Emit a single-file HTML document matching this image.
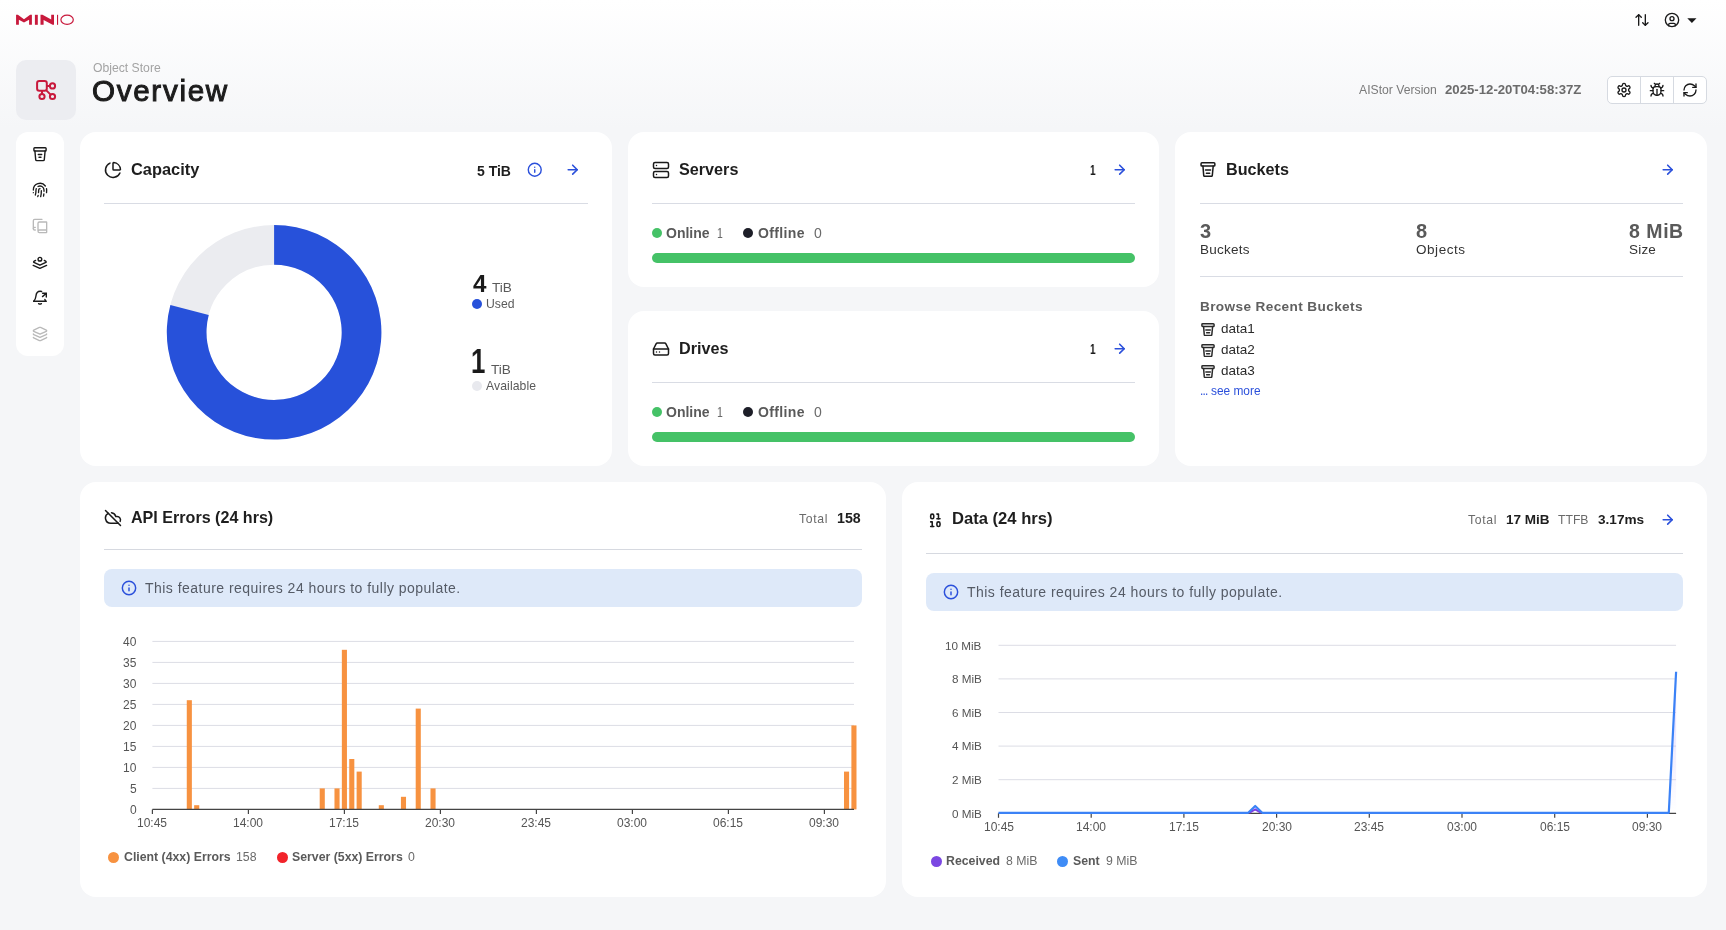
<!DOCTYPE html>
<html><head><meta charset="utf-8"><title>Overview</title>
<style>
html,body{margin:0;padding:0;}
body{width:1726px;height:930px;overflow:hidden;position:relative;font-family:"Liberation Sans",sans-serif;
background:linear-gradient(180deg,#ffffff 0px,#f5f6f8 128px,#f5f6f8 930px);}
.t{position:absolute;line-height:1;white-space:nowrap;will-change:transform;}
.card{position:absolute;background:#fff;border-radius:16px;}
</style></head><body>
<svg style="position:absolute;left:0px;top:0px;" width="80" height="30" viewBox="0 0 80 30" fill="none">
<path d="M16.07 24.8 V14.8 H17.9 L24 19.2 L30.1 14.8 H31.9 V24.8 H29.1 V19.8 L24 22.6 L18.87 19.8 V24.8 Z" fill="#c8193c"/>
<rect x="34.9" y="14.8" width="2.9" height="10" fill="#c8193c"/>
<path d="M40.5 24.8 V14.8 H42.5 L51.2 19.6 V14.8 H54 V24.8 H52.6 L43.6 19.9 V24.8 Z" fill="#c8193c"/>
<rect x="57" y="14.8" width="1.1" height="10" fill="#c8193c"/>
<ellipse cx="67.1" cy="19.75" rx="6.2" ry="4.6" stroke="#c8193c" stroke-width="1.2"/>
</svg>
<svg style="position:absolute;left:1634.00px;top:12.00px" width="16" height="16" viewBox="0 0 24 24" fill="none" stroke="#1a1a1a" stroke-width="2" stroke-linecap="round" stroke-linejoin="round"><path d="m21 16-4 4-4-4"/><path d="M17 20V4"/><path d="m3 8 4-4 4 4"/><path d="M7 4v16"/></svg>
<svg style="position:absolute;left:1664.00px;top:12.00px" width="16" height="16" viewBox="0 0 24 24" fill="none" stroke="#1a1a1a" stroke-width="2" stroke-linecap="round" stroke-linejoin="round"><circle cx="12" cy="12" r="10"/><circle cx="12" cy="10" r="3"/><path d="M7 20.662V19a2 2 0 0 1 2-2h6a2 2 0 0 1 2 2v1.662"/></svg>
<svg style="position:absolute;left:1687px;top:18px;" width="10" height="6" viewBox="0 0 10 6" fill="none"><path d="M0.3 0.3 H9.5 L4.9 5 Z" fill="#1a1a1a"/></svg>
<div style="position:absolute;left:16px;top:60px;width:60px;height:60px;background:#ecedf1;border-radius:10px;"></div>
<svg style="position:absolute;left:34px;top:78px;" width="24" height="24" viewBox="0 0 24 24" fill="none">
<rect x="3.1" y="2.9" width="9.7" height="9.8" rx="2.2" stroke="#c8193c" stroke-width="2"/>
<circle cx="18.5" cy="7.9" r="2.6" stroke="#c8193c" stroke-width="2"/>
<circle cx="8" cy="18.5" r="2.6" stroke="#c8193c" stroke-width="2"/>
<circle cx="18.5" cy="18.5" r="2.6" stroke="#c8193c" stroke-width="2"/>
<path d="M12.8 7.9 H15.9 M8 12.7 V15.9 M12.6 12.6 L16.6 16.6" stroke="#c8193c" stroke-width="2"/>
</svg>
<div class="t" style="left:92.60px;top:61.67px;font-size:12.2px;font-weight:400;color:#a3a3a3;">Object Store</div>
<div class="t" style="left:92.40px;top:75.84px;font-size:29.6px;font-weight:400;color:#1c1c1c;-webkit-text-stroke:1px #1c1c1c;letter-spacing:1.7px;">Overview</div>
<div class="t" style="left:1358.60px;top:83.67px;font-size:12.2px;font-weight:400;color:#7a7a7a;">AIStor Version</div>
<div class="t" style="left:1445.40px;top:82.83px;font-size:13.2px;font-weight:700;color:#6b6b6b;">2025-12-20T04:58:37Z</div>
<div style="position:absolute;left:1607px;top:76px;width:100px;height:28px;box-sizing:border-box;border:1px solid #d6dae1;border-radius:5px;background:#fff;"></div>
<div style="position:absolute;left:1640px;top:77px;width:1px;height:26px;background:#d6dae1;"></div>
<div style="position:absolute;left:1673px;top:77px;width:1px;height:26px;background:#d6dae1;"></div>
<svg style="position:absolute;left:1616.00px;top:81.80px" width="16" height="16" viewBox="0 0 24 24" fill="none" stroke="#1a1a1a" stroke-width="2" stroke-linecap="round" stroke-linejoin="round"><path d="M12.22 2h-.44a2 2 0 0 0-2 2v.18a2 2 0 0 1-1 1.73l-.43.25a2 2 0 0 1-2 0l-.15-.08a2 2 0 0 0-2.73.73l-.22.38a2 2 0 0 0 .73 2.73l.15.1a2 2 0 0 1 1 1.72v.51a2 2 0 0 1-1 1.74l-.15.09a2 2 0 0 0-.73 2.73l.22.38a2 2 0 0 0 2.73.73l.15-.08a2 2 0 0 1 2 0l.43.25a2 2 0 0 1 1 1.73V20a2 2 0 0 0 2 2h.44a2 2 0 0 0 2-2v-.18a2 2 0 0 1 1-1.73l.43-.25a2 2 0 0 1 2 0l.15.08a2 2 0 0 0 2.73-.73l.22-.39a2 2 0 0 0-.73-2.73l-.15-.08a2 2 0 0 1-1-1.74v-.5a2 2 0 0 1 1-1.74l.15-.09a2 2 0 0 0 .73-2.73l-.22-.38a2 2 0 0 0-2.73-.73l-.15.08a2 2 0 0 1-2 0l-.43-.25a2 2 0 0 1-1-1.73V4a2 2 0 0 0-2-2z"/><circle cx="12" cy="12" r="3"/></svg>
<svg style="position:absolute;left:1648.90px;top:81.50px" width="16" height="16" viewBox="0 0 24 24" fill="none" stroke="#1a1a1a" stroke-width="2" stroke-linecap="round" stroke-linejoin="round"><path d="m8 2 1.88 1.88"/><path d="M14.12 3.88 16 2"/><path d="M9 7.13v-1a3.003 3.003 0 1 1 6 0v1"/><path d="M12 20c-3.3 0-6-2.7-6-6v-3a4 4 0 0 1 4-4h4a4 4 0 0 1 4 4v3c0 3.3-2.7 6-6 6"/><path d="M12 20v-9"/><path d="M6.53 9C4.6 8.8 3 7.1 3 5"/><path d="M6 13H2"/><path d="M3 21c0-2.1 1.7-3.9 3.8-4"/><path d="M20.97 5c0 2.1-1.6 3.8-3.5 4"/><path d="M22 13h-4"/><path d="M17.2 17c2.1.1 3.8 1.9 3.8 4"/></svg>
<svg style="position:absolute;left:1681.90px;top:81.60px" width="16" height="16" viewBox="0 0 24 24" fill="none" stroke="#1a1a1a" stroke-width="2" stroke-linecap="round" stroke-linejoin="round"><path d="M3 12a9 9 0 0 1 9-9 9.75 9.75 0 0 1 6.74 2.74L21 8"/><path d="M21 3v5h-5"/><path d="M21 12a9 9 0 0 1-9 9 9.75 9.75 0 0 1-6.74-2.74L3 16"/><path d="M8 16H3v5"/></svg>
<div style="position:absolute;left:16px;top:132px;width:48px;height:224px;background:#fff;border-radius:12px;"></div>
<svg style="position:absolute;left:32px;top:146px;" width="16" height="16" viewBox="0 0 16 16" fill="none">
<rect x="1.9" y="1.7" width="12.2" height="3.3" rx="0.8" stroke="#1a1a1a" stroke-width="1.4" stroke-linecap="round" stroke-linejoin="round"/>
<path d="M2.9 5 L3.7 13.6 Q3.8 14.6 4.8 14.6 H11.2 Q12.2 14.6 12.3 13.6 L13.1 5" stroke="#1a1a1a" stroke-width="1.4" stroke-linecap="round" stroke-linejoin="round"/>
<path d="M6.3 8.5 H9.7 M7 11.3 H9" stroke="#1a1a1a" stroke-width="1.4" stroke-linecap="round" stroke-linejoin="round"/>
</svg>
<svg style="position:absolute;left:31.85px;top:181.50px" width="16" height="16" viewBox="0 0 24 24" fill="none" stroke="#1a1a1a" stroke-width="2" stroke-linecap="round" stroke-linejoin="round"><path d="M12 10a2 2 0 0 0-2 2c0 1.02-.1 2.51-.26 4"/><path d="M14 13.12c0 2.38 0 6.38-1 8.88"/><path d="M17.29 21.02c.12-.6.43-2.3.5-3.02"/><path d="M2 12a10 10 0 0 1 18-6"/><path d="M2 16h.01"/><path d="M21.8 16c.2-2 .131-5.354 0-6"/><path d="M5 19.5C5.5 18 6 15 6 12a6 6 0 0 1 .34-2"/><path d="M8.65 22c.21-.66.45-1.32.57-2"/><path d="M9 6.8a6 6 0 0 1 9 5.2v2"/></svg>
<svg style="position:absolute;left:32.00px;top:217.80px" width="16" height="16" viewBox="0 0 24 24" fill="none" stroke="#b9b9b9" stroke-width="2" stroke-linecap="round" stroke-linejoin="round"><path d="M2 16V4a2 2 0 0 1 2-2h11"/><path d="M22 18H11a2 2 0 1 0 0 4h10.5a.5.5 0 0 0 .5-.5v-15a.5.5 0 0 0-.5-.5H11a2 2 0 0 0-2 2v12"/><path d="M5 14H4a2 2 0 1 0 0 4h1"/></svg>
<svg style="position:absolute;left:31px;top:254px;" width="18" height="18" viewBox="0 0 18 18" fill="none">
<circle cx="8.9" cy="5.2" r="1.85" stroke="#1a1a1a" stroke-width="1.4" stroke-linecap="round" stroke-linejoin="round"/>
<path d="M4.6 6.4 L2.9 7.4 Q2.3 8 2.9 8.4 L8.9 11.2 L14.9 8.4 Q15.5 8 14.9 7.4 L13.3 6.4" stroke="#1a1a1a" stroke-width="1.4" stroke-linecap="round" stroke-linejoin="round"/>
<path d="M2.2 11.4 L8.9 14.3 L15.6 11.4" stroke="#1a1a1a" stroke-width="1.4" stroke-linecap="round" stroke-linejoin="round"/>
</svg>
<svg style="position:absolute;left:31px;top:288px;" width="18" height="18" viewBox="0 0 18 18" fill="none">
<path d="M2.7 13.3 C3.9 12 4.7 10.5 4.9 8.2 C5.2 5 6.6 3.3 9.2 3.3 Q10 3.3 10.6 3.5" stroke="#1a1a1a" stroke-width="1.4" stroke-linecap="round" stroke-linejoin="round"/>
<path d="M2.7 13.3 H15.3 Q14.3 12.6 13.9 11.5" stroke="#1a1a1a" stroke-width="1.4" stroke-linecap="round" stroke-linejoin="round"/>
<path d="M11.5 8.6 L15.3 5.3 M11.6 5.3 H15.3 V9" stroke="#1a1a1a" stroke-width="1.4" stroke-linecap="round" stroke-linejoin="round"/>
<path d="M7.6 15.7 Q9 16.6 10.4 15.7" stroke="#1a1a1a" stroke-width="1.4" stroke-linecap="round" stroke-linejoin="round"/>
</svg>
<svg style="position:absolute;left:32.10px;top:325.80px" width="16" height="16" viewBox="0 0 24 24" fill="none" stroke="#b9b9b9" stroke-width="2" stroke-linecap="round" stroke-linejoin="round"><path d="M12.83 2.18a2 2 0 0 0-1.66 0L2.6 6.08a1 1 0 0 0 0 1.83l8.58 3.91a2 2 0 0 0 1.66 0l8.58-3.9a1 1 0 0 0 0-1.83z"/><path d="M2 12a1 1 0 0 0 .58.91l8.6 3.91a2 2 0 0 0 1.65 0l8.58-3.9A1 1 0 0 0 22 12"/><path d="M2 17a1 1 0 0 0 .58.91l8.6 3.91a2 2 0 0 0 1.65 0l8.58-3.9A1 1 0 0 0 22 17"/></svg>
<div class="card" style="left:80px;top:132px;width:532px;height:334px;"></div>
<svg style="position:absolute;left:104.00px;top:160.85px" width="18" height="18" viewBox="0 0 24 24" fill="none" stroke="#1a1a1a" stroke-width="2" stroke-linecap="round" stroke-linejoin="round"><path d="M21 12c.552 0 1.005-.449.95-.998a10 10 0 0 0-8.953-8.951c-.55-.055-.998.398-.998.95v8a1 1 0 0 0 1 1z"/><path d="M21.21 15.89A10 10 0 1 1 8 2.83"/></svg>
<div class="t" style="left:130.80px;top:161.42px;font-size:16.4px;font-weight:700;color:#1e1e1e;">Capacity</div>
<div class="t" style="left:476.60px;top:163.55px;font-size:14px;font-weight:700;color:#1e1e1e;">5 TiB</div>
<svg style="position:absolute;left:527.25px;top:162.25px" width="15.5" height="15.5" viewBox="0 0 24 24" fill="none" stroke="#2b50db" stroke-width="2.2" stroke-linecap="round" stroke-linejoin="round"><circle cx="12" cy="12" r="10"/><path d="M12 16v-4"/><path d="M12 8h.01"/></svg>
<svg style="position:absolute;left:565.30px;top:162.30px" width="15.4" height="15.4" viewBox="0 0 24 24" fill="none" stroke="#2b50db" stroke-width="2.5" stroke-linecap="round" stroke-linejoin="round"><path d="M5 12h14"/><path d="m12 5 7 7-7 7"/></svg>
<div style="position:absolute;left:104px;top:203px;width:484px;height:1px;background:#d9dce4;"></div>
<svg style="position:absolute;left:0;top:0" width="1726" height="930" viewBox="0 0 1726 930">
<circle cx="274.1" cy="332.3" r="87.44999999999999" stroke="#ebecf0" stroke-width="39.7" fill="none"/>
<path d="M274.10 225.00 A107.3 107.3 0 1 1 170.36 304.90 L208.74 315.04 A67.6 67.6 0 1 0 274.10 264.70 Z" fill="#2751da"/>
</svg>
<div class="t" style="left:472.80px;top:272.31px;font-size:24.2px;font-weight:700;color:#1a1a1a;">4</div>
<div class="t" style="left:491.90px;top:281.29px;font-size:13.6px;font-weight:400;color:#5a5a5a;">TiB</div>
<div style="position:absolute;left:472px;top:299px;width:10px;height:10px;background:#2751da;border-radius:50%;"></div>
<div class="t" style="left:486.40px;top:297.57px;font-size:12.2px;font-weight:400;color:#5a5a5a;">Used</div>
<div class="t" style="left:471.30px;top:343.37px;font-size:35px;font-weight:700;color:#1a1a1a;transform:scaleX(0.74);transform-origin:0 0;">1</div>
<div class="t" style="left:491.00px;top:363.29px;font-size:13.6px;font-weight:400;color:#5a5a5a;">TiB</div>
<div style="position:absolute;left:472px;top:381px;width:10px;height:10px;background:#e8e9ee;border-radius:50%;"></div>
<div class="t" style="left:486.40px;top:380.17px;font-size:12.2px;font-weight:400;color:#5a5a5a;letter-spacing:0.1px;">Available</div>
<div class="card" style="left:628px;top:132px;width:531px;height:155px;"></div>
<svg style="position:absolute;left:652.00px;top:161.05px" width="18" height="18" viewBox="0 0 24 24" fill="none" stroke="#1a1a1a" stroke-width="2" stroke-linecap="round" stroke-linejoin="round"><rect width="20" height="8" x="2" y="2" rx="2" ry="2"/><rect width="20" height="8" x="2" y="14" rx="2" ry="2"/><line x1="6" x2="6.01" y1="6" y2="6"/><line x1="6" x2="6.01" y1="18" y2="18"/></svg>
<div class="t" style="left:678.60px;top:161.49px;font-size:16.2px;font-weight:700;color:#1e1e1e;">Servers</div>
<div class="t" style="left:1090.30px;top:163.15px;font-size:14px;font-weight:700;color:#1e1e1e;transform:scaleX(0.7);transform-origin:0 0;">1</div>
<svg style="position:absolute;left:1112.30px;top:162.30px" width="15.4" height="15.4" viewBox="0 0 24 24" fill="none" stroke="#2b50db" stroke-width="2.5" stroke-linecap="round" stroke-linejoin="round"><path d="M5 12h14"/><path d="m12 5 7 7-7 7"/></svg>
<div style="position:absolute;left:652px;top:203px;width:483px;height:1px;background:#d9dce4;"></div>
<div style="position:absolute;left:652px;top:228px;width:10px;height:10px;background:#45c267;border-radius:50%;"></div>
<div class="t" style="left:665.80px;top:226.15px;font-size:14px;font-weight:700;color:#5a5a5a;">Online</div>
<div class="t" style="left:716.60px;top:226.15px;font-size:14px;font-weight:400;color:#6a6a6a;transform:scaleX(0.75);transform-origin:0 0;">1</div>
<div style="position:absolute;left:743px;top:228px;width:10px;height:10px;background:#1d1e28;border-radius:50%;"></div>
<div class="t" style="left:757.70px;top:226.15px;font-size:14px;font-weight:700;color:#5a5a5a;letter-spacing:0.35px;">Offline</div>
<div class="t" style="left:813.50px;top:226.15px;font-size:14px;font-weight:400;color:#6a6a6a;">0</div>
<div style="position:absolute;left:652px;top:253px;width:483px;height:10px;background:#45c267;border-radius:5px;"></div>
<div class="card" style="left:628px;top:311px;width:531px;height:155px;"></div>
<svg style="position:absolute;left:651.85px;top:339.90px" width="18" height="18" viewBox="0 0 24 24" fill="none" stroke="#1a1a1a" stroke-width="2" stroke-linecap="round" stroke-linejoin="round"><line x1="22" x2="2" y1="12" y2="12"/><path d="M5.45 5.11 2 12v6a2 2 0 0 0 2 2h16a2 2 0 0 0 2-2v-6l-3.45-6.89A2 2 0 0 0 16.76 4H7.24a2 2 0 0 0-1.79 1.11z"/><line x1="6" x2="6.01" y1="16" y2="16"/><line x1="10" x2="10.01" y1="16" y2="16"/></svg>
<div class="t" style="left:678.60px;top:340.49px;font-size:16.2px;font-weight:700;color:#1e1e1e;">Drives</div>
<div class="t" style="left:1090.30px;top:342.15px;font-size:14px;font-weight:700;color:#1e1e1e;transform:scaleX(0.7);transform-origin:0 0;">1</div>
<svg style="position:absolute;left:1112.30px;top:341.30px" width="15.4" height="15.4" viewBox="0 0 24 24" fill="none" stroke="#2b50db" stroke-width="2.5" stroke-linecap="round" stroke-linejoin="round"><path d="M5 12h14"/><path d="m12 5 7 7-7 7"/></svg>
<div style="position:absolute;left:652px;top:382px;width:483px;height:1px;background:#d9dce4;"></div>
<div style="position:absolute;left:652px;top:407px;width:10px;height:10px;background:#45c267;border-radius:50%;"></div>
<div class="t" style="left:665.80px;top:405.15px;font-size:14px;font-weight:700;color:#5a5a5a;">Online</div>
<div class="t" style="left:716.60px;top:405.15px;font-size:14px;font-weight:400;color:#6a6a6a;transform:scaleX(0.75);transform-origin:0 0;">1</div>
<div style="position:absolute;left:743px;top:407px;width:10px;height:10px;background:#1d1e28;border-radius:50%;"></div>
<div class="t" style="left:757.70px;top:405.15px;font-size:14px;font-weight:700;color:#5a5a5a;letter-spacing:0.35px;">Offline</div>
<div class="t" style="left:813.50px;top:405.15px;font-size:14px;font-weight:400;color:#6a6a6a;">0</div>
<div style="position:absolute;left:652px;top:432px;width:483px;height:10px;background:#45c267;border-radius:5px;"></div>
<div class="card" style="left:1175px;top:132px;width:532px;height:334px;"></div>
<svg style="position:absolute;left:1200px;top:161px;transform-origin:0 0;transform:scale(1.0);" width="16" height="16" viewBox="0 0 16 16" fill="none">
<rect x="1.05" y="1.85" width="13.8" height="3.2" rx="0.9" stroke="#1a1a1a" stroke-width="1.5" stroke-linecap="round" stroke-linejoin="round"/>
<path d="M2.95 5.1 L3.7 14.4 Q3.8 15.35 4.7 15.35 H11.3 Q12.2 15.35 12.3 14.4 L13.2 5.1" stroke="#1a1a1a" stroke-width="1.5" stroke-linecap="round" stroke-linejoin="round"/>
<path d="M5.5 9 H10.6 M6.4 12.35 H9.7" stroke="#1a1a1a" stroke-width="1.5" stroke-linecap="round" stroke-linejoin="round"/>
</svg>
<div class="t" style="left:1226.00px;top:161.29px;font-size:16.2px;font-weight:700;color:#1e1e1e;">Buckets</div>
<svg style="position:absolute;left:1660.30px;top:162.30px" width="15.4" height="15.4" viewBox="0 0 24 24" fill="none" stroke="#2b50db" stroke-width="2.5" stroke-linecap="round" stroke-linejoin="round"><path d="M5 12h14"/><path d="m12 5 7 7-7 7"/></svg>
<div style="position:absolute;left:1200px;top:203px;width:483px;height:1px;background:#d9dce4;"></div>
<div class="t" style="left:1200.00px;top:221.07px;font-size:20px;font-weight:700;color:#5a5a5a;">3</div>
<div class="t" style="left:1200.00px;top:243.17px;font-size:13.5px;font-weight:400;color:#333;letter-spacing:0.25px;">Buckets</div>
<div class="t" style="left:1415.60px;top:220.87px;font-size:20px;font-weight:700;color:#5a5a5a;">8</div>
<div class="t" style="left:1415.60px;top:243.17px;font-size:13.5px;font-weight:400;color:#333;letter-spacing:0.55px;">Objects</div>
<div class="t" style="left:1628.60px;top:222.29px;font-size:19.5px;font-weight:700;color:#5a5a5a;letter-spacing:0.55px;">8 MiB</div>
<div class="t" style="left:1628.60px;top:243.17px;font-size:13.5px;font-weight:400;color:#333;letter-spacing:0.2px;">Size</div>
<div style="position:absolute;left:1200px;top:276px;width:483px;height:1px;background:#d9dce4;"></div>
<div class="t" style="left:1200.00px;top:299.89px;font-size:13.6px;font-weight:700;color:#606060;letter-spacing:0.38px;">Browse Recent Buckets</div>
<svg style="position:absolute;left:1200.6px;top:321.6px;transform-origin:0 0;transform:scale(0.88);" width="16" height="16" viewBox="0 0 16 16" fill="none">
<rect x="1.05" y="1.85" width="13.8" height="3.2" rx="0.9" stroke="#2a2a2a" stroke-width="1.7" stroke-linecap="round" stroke-linejoin="round"/>
<path d="M2.95 5.1 L3.7 14.4 Q3.8 15.35 4.7 15.35 H11.3 Q12.2 15.35 12.3 14.4 L13.2 5.1" stroke="#2a2a2a" stroke-width="1.7" stroke-linecap="round" stroke-linejoin="round"/>
<path d="M5.5 9 H10.6 M6.4 12.35 H9.7" stroke="#2a2a2a" stroke-width="1.7" stroke-linecap="round" stroke-linejoin="round"/>
</svg>
<div class="t" style="left:1220.70px;top:322.47px;font-size:13.5px;font-weight:400;color:#2a2a2a;">data1</div>
<svg style="position:absolute;left:1200.6px;top:342.6px;transform-origin:0 0;transform:scale(0.88);" width="16" height="16" viewBox="0 0 16 16" fill="none">
<rect x="1.05" y="1.85" width="13.8" height="3.2" rx="0.9" stroke="#2a2a2a" stroke-width="1.7" stroke-linecap="round" stroke-linejoin="round"/>
<path d="M2.95 5.1 L3.7 14.4 Q3.8 15.35 4.7 15.35 H11.3 Q12.2 15.35 12.3 14.4 L13.2 5.1" stroke="#2a2a2a" stroke-width="1.7" stroke-linecap="round" stroke-linejoin="round"/>
<path d="M5.5 9 H10.6 M6.4 12.35 H9.7" stroke="#2a2a2a" stroke-width="1.7" stroke-linecap="round" stroke-linejoin="round"/>
</svg>
<div class="t" style="left:1220.70px;top:343.42px;font-size:13.5px;font-weight:400;color:#2a2a2a;">data2</div>
<svg style="position:absolute;left:1200.6px;top:363.6px;transform-origin:0 0;transform:scale(0.88);" width="16" height="16" viewBox="0 0 16 16" fill="none">
<rect x="1.05" y="1.85" width="13.8" height="3.2" rx="0.9" stroke="#2a2a2a" stroke-width="1.7" stroke-linecap="round" stroke-linejoin="round"/>
<path d="M2.95 5.1 L3.7 14.4 Q3.8 15.35 4.7 15.35 H11.3 Q12.2 15.35 12.3 14.4 L13.2 5.1" stroke="#2a2a2a" stroke-width="1.7" stroke-linecap="round" stroke-linejoin="round"/>
<path d="M5.5 9 H10.6 M6.4 12.35 H9.7" stroke="#2a2a2a" stroke-width="1.7" stroke-linecap="round" stroke-linejoin="round"/>
</svg>
<div class="t" style="left:1220.70px;top:364.37px;font-size:13.5px;font-weight:400;color:#2a2a2a;">data3</div>
<div class="t" style="left:1200.20px;top:385.73px;font-size:11.9px;font-weight:400;color:#2b50db;"><span style="letter-spacing:-0.75px">...</span> see more</div>
<div class="card" style="left:80px;top:482px;width:806px;height:415px;"></div>
<svg style="position:absolute;left:104.10px;top:509.00px" width="18" height="18" viewBox="0 0 24 24" fill="none" stroke="#1a1a1a" stroke-width="2" stroke-linecap="round" stroke-linejoin="round"><path d="m2 2 20 20"/><path d="M5.782 5.782A7 7 0 0 0 9 19h8.5a4.5 4.5 0 0 0 1.307-.193"/><path d="M21.532 16.5A4.5 4.5 0 0 0 17.5 10h-1.79A7.008 7.008 0 0 0 10 5.07"/></svg>
<div class="t" style="left:130.50px;top:509.47px;font-size:16.1px;font-weight:700;color:#1e1e1e;">API Errors (24 hrs)</div>
<div class="t" style="left:798.60px;top:512.87px;font-size:12.2px;font-weight:400;color:#6a6a6a;letter-spacing:0.7px;">Total</div>
<div class="t" style="left:837.00px;top:511.18px;font-size:14.2px;font-weight:700;color:#1e1e1e;">158</div>
<div style="position:absolute;left:104px;top:549px;width:758px;height:1px;background:#d6d9e0;"></div>
<div style="position:absolute;left:104px;top:569px;width:758px;height:38px;background:#dee9f9;border-radius:8px;"></div>
<svg style="position:absolute;left:121.00px;top:580.00px" width="16" height="16" viewBox="0 0 24 24" fill="none" stroke="#2b50db" stroke-width="2.2" stroke-linecap="round" stroke-linejoin="round"><circle cx="12" cy="12" r="10"/><path d="M12 16v-4"/><path d="M12 8h.01"/></svg>
<div class="t" style="left:145.30px;top:580.95px;font-size:14px;font-weight:400;color:#555b66;letter-spacing:0.47px;">This feature requires 24 hours to fully populate.</div>
<svg style="position:absolute;left:0;top:0" width="1726" height="930" viewBox="0 0 1726 930"><line x1="152.4" y1="788.4" x2="854.0" y2="788.4" stroke="#dcdde5" stroke-width="1"/><line x1="152.4" y1="767.4" x2="854.0" y2="767.4" stroke="#dcdde5" stroke-width="1"/><line x1="152.4" y1="746.4" x2="854.0" y2="746.4" stroke="#dcdde5" stroke-width="1"/><line x1="152.4" y1="725.4" x2="854.0" y2="725.4" stroke="#dcdde5" stroke-width="1"/><line x1="152.4" y1="704.4" x2="854.0" y2="704.4" stroke="#dcdde5" stroke-width="1"/><line x1="152.4" y1="683.4" x2="854.0" y2="683.4" stroke="#dcdde5" stroke-width="1"/><line x1="152.4" y1="662.4" x2="854.0" y2="662.4" stroke="#dcdde5" stroke-width="1"/><line x1="152.4" y1="641.4" x2="854.0" y2="641.4" stroke="#dcdde5" stroke-width="1"/><rect x="186.77" y="700.20" width="5.1" height="109.20" fill="#f79240"/><rect x="194.16" y="805.20" width="5.1" height="4.20" fill="#f79240"/><rect x="319.70" y="788.40" width="5.1" height="21.00" fill="#f79240"/><rect x="334.47" y="788.40" width="5.1" height="21.00" fill="#f79240"/><rect x="341.85" y="649.80" width="5.1" height="159.60" fill="#f79240"/><rect x="349.23" y="759.00" width="5.1" height="50.40" fill="#f79240"/><rect x="356.62" y="771.60" width="5.1" height="37.80" fill="#f79240"/><rect x="378.77" y="805.20" width="5.1" height="4.20" fill="#f79240"/><rect x="400.93" y="796.80" width="5.1" height="12.60" fill="#f79240"/><rect x="415.70" y="708.60" width="5.1" height="100.80" fill="#f79240"/><rect x="430.47" y="788.40" width="5.1" height="21.00" fill="#f79240"/><rect x="844.00" y="771.60" width="5.1" height="37.80" fill="#f79240"/><rect x="851.39" y="725.40" width="5.1" height="84.00" fill="#f79240"/><line x1="152.4" y1="809.4" x2="854.0" y2="809.4" stroke="#444" stroke-width="1.2"/><line x1="152.4" y1="809.4" x2="152.4" y2="813.9" stroke="#444" stroke-width="1.2"/><line x1="248.4" y1="809.4" x2="248.4" y2="813.9" stroke="#444" stroke-width="1.2"/><line x1="344.4" y1="809.4" x2="344.4" y2="813.9" stroke="#444" stroke-width="1.2"/><line x1="440.4" y1="809.4" x2="440.4" y2="813.9" stroke="#444" stroke-width="1.2"/><line x1="536.4" y1="809.4" x2="536.4" y2="813.9" stroke="#444" stroke-width="1.2"/><line x1="632.4" y1="809.4" x2="632.4" y2="813.9" stroke="#444" stroke-width="1.2"/><line x1="728.4" y1="809.4" x2="728.4" y2="813.9" stroke="#444" stroke-width="1.2"/><line x1="824.4" y1="809.4" x2="824.4" y2="813.9" stroke="#444" stroke-width="1.2"/></svg>
<div class="t" style="right:1589.70px;top:803.94px;font-size:12px;font-weight:400;color:#555;">0</div>
<div class="t" style="right:1589.70px;top:782.94px;font-size:12px;font-weight:400;color:#555;">5</div>
<div class="t" style="right:1589.70px;top:761.94px;font-size:12px;font-weight:400;color:#555;">10</div>
<div class="t" style="right:1589.70px;top:740.94px;font-size:12px;font-weight:400;color:#555;">15</div>
<div class="t" style="right:1589.70px;top:719.94px;font-size:12px;font-weight:400;color:#555;">20</div>
<div class="t" style="right:1589.70px;top:698.94px;font-size:12px;font-weight:400;color:#555;">25</div>
<div class="t" style="right:1589.70px;top:677.94px;font-size:12px;font-weight:400;color:#555;">30</div>
<div class="t" style="right:1589.70px;top:656.94px;font-size:12px;font-weight:400;color:#555;">35</div>
<div class="t" style="right:1589.70px;top:635.94px;font-size:12px;font-weight:400;color:#555;">40</div>
<div class="t" style="left:52.40px;width:200px;text-align:center;top:816.84px;font-size:12px;font-weight:400;color:#555;">10:45</div>
<div class="t" style="left:148.40px;width:200px;text-align:center;top:816.84px;font-size:12px;font-weight:400;color:#555;">14:00</div>
<div class="t" style="left:244.40px;width:200px;text-align:center;top:816.84px;font-size:12px;font-weight:400;color:#555;">17:15</div>
<div class="t" style="left:340.40px;width:200px;text-align:center;top:816.84px;font-size:12px;font-weight:400;color:#555;">20:30</div>
<div class="t" style="left:436.40px;width:200px;text-align:center;top:816.84px;font-size:12px;font-weight:400;color:#555;">23:45</div>
<div class="t" style="left:532.40px;width:200px;text-align:center;top:816.84px;font-size:12px;font-weight:400;color:#555;">03:00</div>
<div class="t" style="left:628.40px;width:200px;text-align:center;top:816.84px;font-size:12px;font-weight:400;color:#555;">06:15</div>
<div class="t" style="left:724.40px;width:200px;text-align:center;top:816.84px;font-size:12px;font-weight:400;color:#555;">09:30</div>
<div style="position:absolute;left:108.3px;top:851.5px;width:11.0px;height:11.0px;background:#f79240;border-radius:50%;"></div>
<div class="t" style="left:124.30px;top:850.59px;font-size:12.3px;font-weight:700;color:#5a5a5a;">Client (4xx) Errors</div>
<div class="t" style="left:236.30px;top:850.59px;font-size:12.3px;font-weight:400;color:#6a6a6a;">158</div>
<div style="position:absolute;left:276.5px;top:851.5px;width:11.0px;height:11.0px;background:#f2232a;border-radius:50%;"></div>
<div class="t" style="left:292.20px;top:850.59px;font-size:12.3px;font-weight:700;color:#5a5a5a;">Server (5xx) Errors</div>
<div class="t" style="left:407.80px;top:850.59px;font-size:12.3px;font-weight:400;color:#6a6a6a;">0</div>
<div class="card" style="left:902px;top:482px;width:805px;height:415px;"></div>
<svg style="position:absolute;left:925.65px;top:510.65px" width="18.7" height="18.7" viewBox="0 0 24 24" fill="none" stroke="#1a1a1a" stroke-width="2" stroke-linecap="round" stroke-linejoin="round"><rect x="14" y="14" width="4" height="6" rx="2"/><rect x="6" y="4" width="4" height="6" rx="2"/><path d="M6 20h4"/><path d="M14 10h4"/><path d="M6 14h2v6"/><path d="M14 4h2v6"/></svg>
<div class="t" style="left:952.20px;top:511.35px;font-size:16.6px;font-weight:700;color:#1e1e1e;">Data (24 hrs)</div>
<div class="t" style="left:1467.70px;top:513.57px;font-size:12.2px;font-weight:400;color:#6a6a6a;letter-spacing:0.7px;">Total</div>
<div class="t" style="left:1505.80px;top:513.47px;font-size:13.5px;font-weight:700;color:#1e1e1e;">17 MiB</div>
<div class="t" style="left:1558.30px;top:513.57px;font-size:12.2px;font-weight:400;color:#6a6a6a;">TTFB</div>
<div class="t" style="left:1597.70px;top:513.39px;font-size:13.6px;font-weight:700;color:#1e1e1e;">3.17ms</div>
<svg style="position:absolute;left:1660.30px;top:512.30px" width="15.4" height="15.4" viewBox="0 0 24 24" fill="none" stroke="#2b50db" stroke-width="2.5" stroke-linecap="round" stroke-linejoin="round"><path d="M5 12h14"/><path d="m12 5 7 7-7 7"/></svg>
<div style="position:absolute;left:926px;top:553px;width:757px;height:1px;background:#d6d9e0;"></div>
<div style="position:absolute;left:926px;top:573px;width:757px;height:38px;background:#dee9f9;border-radius:8px;"></div>
<svg style="position:absolute;left:943.00px;top:584.00px" width="16" height="16" viewBox="0 0 24 24" fill="none" stroke="#2b50db" stroke-width="2.2" stroke-linecap="round" stroke-linejoin="round"><circle cx="12" cy="12" r="10"/><path d="M12 16v-4"/><path d="M12 8h.01"/></svg>
<div class="t" style="left:966.60px;top:584.95px;font-size:14px;font-weight:400;color:#555b66;letter-spacing:0.47px;">This feature requires 24 hours to fully populate.</div>
<svg style="position:absolute;left:0;top:0" width="1726" height="930" viewBox="0 0 1726 930"><line x1="998.5" y1="779.7" x2="1676.1" y2="779.7" stroke="#dcdde5" stroke-width="1"/><line x1="998.5" y1="746.1" x2="1676.1" y2="746.1" stroke="#dcdde5" stroke-width="1"/><line x1="998.5" y1="712.5" x2="1676.1" y2="712.5" stroke="#dcdde5" stroke-width="1"/><line x1="998.5" y1="678.9" x2="1676.1" y2="678.9" stroke="#dcdde5" stroke-width="1"/><line x1="998.5" y1="645.3" x2="1676.1" y2="645.3" stroke="#dcdde5" stroke-width="1"/><line x1="998.5" y1="813.3" x2="1676.1" y2="813.3" stroke="#444" stroke-width="1.2"/><line x1="998.5" y1="813.3" x2="998.5" y2="817.8" stroke="#444" stroke-width="1.2"/><line x1="1091.2" y1="813.3" x2="1091.2" y2="817.8" stroke="#444" stroke-width="1.2"/><line x1="1183.9" y1="813.3" x2="1183.9" y2="817.8" stroke="#444" stroke-width="1.2"/><line x1="1276.6" y1="813.3" x2="1276.6" y2="817.8" stroke="#444" stroke-width="1.2"/><line x1="1369.3" y1="813.3" x2="1369.3" y2="817.8" stroke="#444" stroke-width="1.2"/><line x1="1462.0" y1="813.3" x2="1462.0" y2="817.8" stroke="#444" stroke-width="1.2"/><line x1="1554.7" y1="813.3" x2="1554.7" y2="817.8" stroke="#444" stroke-width="1.2"/><line x1="1647.4" y1="813.3" x2="1647.4" y2="817.8" stroke="#444" stroke-width="1.2"/><defs><linearGradient id="gf" x1="0" y1="0" x2="0" y2="1"><stop offset="0" stop-color="#a78bfa" stop-opacity="0.35"/><stop offset="1" stop-color="#a78bfa" stop-opacity="0"/></linearGradient></defs><path d="M1668.8 813.3 L1676.1 671.8 L1676.1 813.3 Z" fill="url(#gf)"/><path d="M1249.2 812.8 L1255.2 809.4 L1261.2 812.8" stroke="#7b3fe4" stroke-width="2" fill="none"/><path d="M998.5 812.8 L1248.2 812.8 L1255.2 806 L1262.2 812.8 L1668.8 812.8 L1676.1 671.8" stroke="#3b82f6" stroke-width="2.2" fill="none" stroke-linejoin="round"/></svg>
<div class="t" style="right:744.20px;top:807.60px;font-size:11.7px;font-weight:400;color:#555;">0 MiB</div>
<div class="t" style="right:744.20px;top:774.00px;font-size:11.7px;font-weight:400;color:#555;">2 MiB</div>
<div class="t" style="right:744.20px;top:740.40px;font-size:11.7px;font-weight:400;color:#555;">4 MiB</div>
<div class="t" style="right:744.20px;top:706.80px;font-size:11.7px;font-weight:400;color:#555;">6 MiB</div>
<div class="t" style="right:744.20px;top:673.20px;font-size:11.7px;font-weight:400;color:#555;">8 MiB</div>
<div class="t" style="right:744.20px;top:639.60px;font-size:11.7px;font-weight:400;color:#555;">10 MiB</div>
<div class="t" style="left:898.50px;width:200px;text-align:center;top:820.84px;font-size:12px;font-weight:400;color:#555;">10:45</div>
<div class="t" style="left:991.20px;width:200px;text-align:center;top:820.84px;font-size:12px;font-weight:400;color:#555;">14:00</div>
<div class="t" style="left:1083.90px;width:200px;text-align:center;top:820.84px;font-size:12px;font-weight:400;color:#555;">17:15</div>
<div class="t" style="left:1176.60px;width:200px;text-align:center;top:820.84px;font-size:12px;font-weight:400;color:#555;">20:30</div>
<div class="t" style="left:1269.30px;width:200px;text-align:center;top:820.84px;font-size:12px;font-weight:400;color:#555;">23:45</div>
<div class="t" style="left:1362.00px;width:200px;text-align:center;top:820.84px;font-size:12px;font-weight:400;color:#555;">03:00</div>
<div class="t" style="left:1454.70px;width:200px;text-align:center;top:820.84px;font-size:12px;font-weight:400;color:#555;">06:15</div>
<div class="t" style="left:1547.40px;width:200px;text-align:center;top:820.84px;font-size:12px;font-weight:400;color:#555;">09:30</div>
<div style="position:absolute;left:930.5px;top:855.5px;width:11.0px;height:11.0px;background:#7b47e2;border-radius:50%;"></div>
<div class="t" style="left:945.50px;top:854.59px;font-size:12.3px;font-weight:700;color:#5a5a5a;">Received</div>
<div class="t" style="left:1005.50px;top:854.59px;font-size:12.3px;font-weight:400;color:#6a6a6a;">8 MiB</div>
<div style="position:absolute;left:1057.2px;top:855.5px;width:11.0px;height:11.0px;background:#3f8cf6;border-radius:50%;"></div>
<div class="t" style="left:1073.20px;top:854.59px;font-size:12.3px;font-weight:700;color:#5a5a5a;">Sent</div>
<div class="t" style="left:1106.30px;top:854.59px;font-size:12.3px;font-weight:400;color:#6a6a6a;">9 MiB</div>
</body></html>
